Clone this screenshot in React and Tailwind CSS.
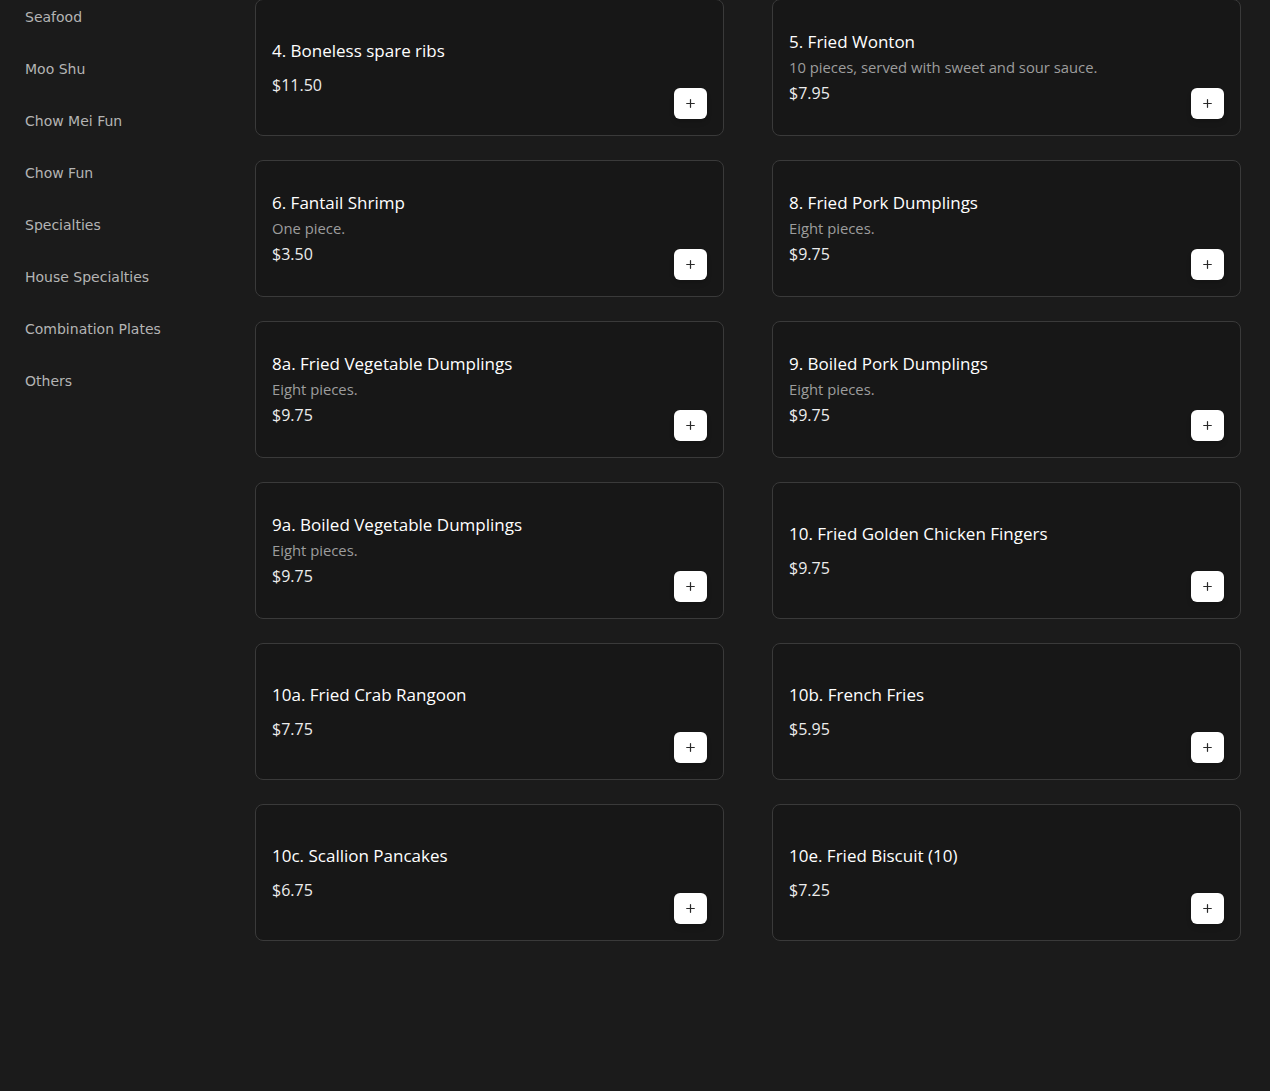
import { Plus } from "lucide-react";

const categories = [
  "Seafood",
  "Moo Shu",
  "Chow Mei Fun",
  "Chow Fun",
  "Specialties",
  "House Specialties",
  "Combination Plates",
  "Others",
];

const items = [
  { name: "4. Boneless spare ribs", price: "$11.50" },
  { name: "5. Fried Wonton", desc: "10 pieces, served with sweet and sour sauce.", price: "$7.95" },
  { name: "6. Fantail Shrimp", desc: "One piece.", price: "$3.50" },
  { name: "8. Fried Pork Dumplings", desc: "Eight pieces.", price: "$9.75" },
  { name: "8a. Fried Vegetable Dumplings", desc: "Eight pieces.", price: "$9.75" },
  { name: "9. Boiled Pork Dumplings", desc: "Eight pieces.", price: "$9.75" },
  { name: "9a. Boiled Vegetable Dumplings", desc: "Eight pieces.", price: "$9.75" },
  { name: "10. Fried Golden Chicken Fingers", price: "$9.75" },
  { name: "10a. Fried Crab Rangoon", price: "$7.75" },
  { name: "10b. French Fries", price: "$5.95" },
  { name: "10c. Scallion Pancakes", price: "$6.75" },
  { name: "10e. Fried Biscuit (10)", price: "$7.25" },
];

function MenuCard({ item }) {
  return (
    <div className="flex h-[137px] items-center rounded-lg border border-[#3a3a3a] bg-[#171717] px-4">
      <div className="flex-1 font-['Open_Sans',sans-serif]">
        <h3 className="text-[17px] leading-6 font-medium text-white">{item.name}</h3>
        {item.desc && (
          <p className="mt-[3px] text-[14.8px] leading-5 text-[#9d9d9d]">{item.desc}</p>
        )}
        <p className={`${item.desc ? "mt-1" : "mt-[10px]"} text-[16px] leading-6 text-[#ececec]`}>
          {item.price}
        </p>
      </div>
      <button className="mb-4 flex h-[31px] w-[33px] items-center justify-center self-end rounded-md bg-white text-[#2a2a2a] shadow-md">
        <Plus size={13} strokeWidth={2.25} />
      </button>
    </div>
  );
}

export default function App() {
  return (
    <div className="flex min-h-screen bg-[#1b1b1b]">
      <aside className="w-[230px] shrink-0 pl-[25px] pt-[7px]">
        <ul className="flex flex-col gap-8 font-['DejaVu_Sans',sans-serif] text-[14px] leading-5 text-[#b4b4b4]">
          {categories.map((c) => (
            <li key={c}>{c}</li>
          ))}
        </ul>
      </aside>
      <main className="flex-1 pl-[25px] pr-[29px]">
        <div className="-mt-px grid grid-cols-2 gap-x-12 gap-y-6">
          {items.map((item) => (
            <MenuCard key={item.name} item={item} />
          ))}
        </div>
      </main>
    </div>
  );
}
